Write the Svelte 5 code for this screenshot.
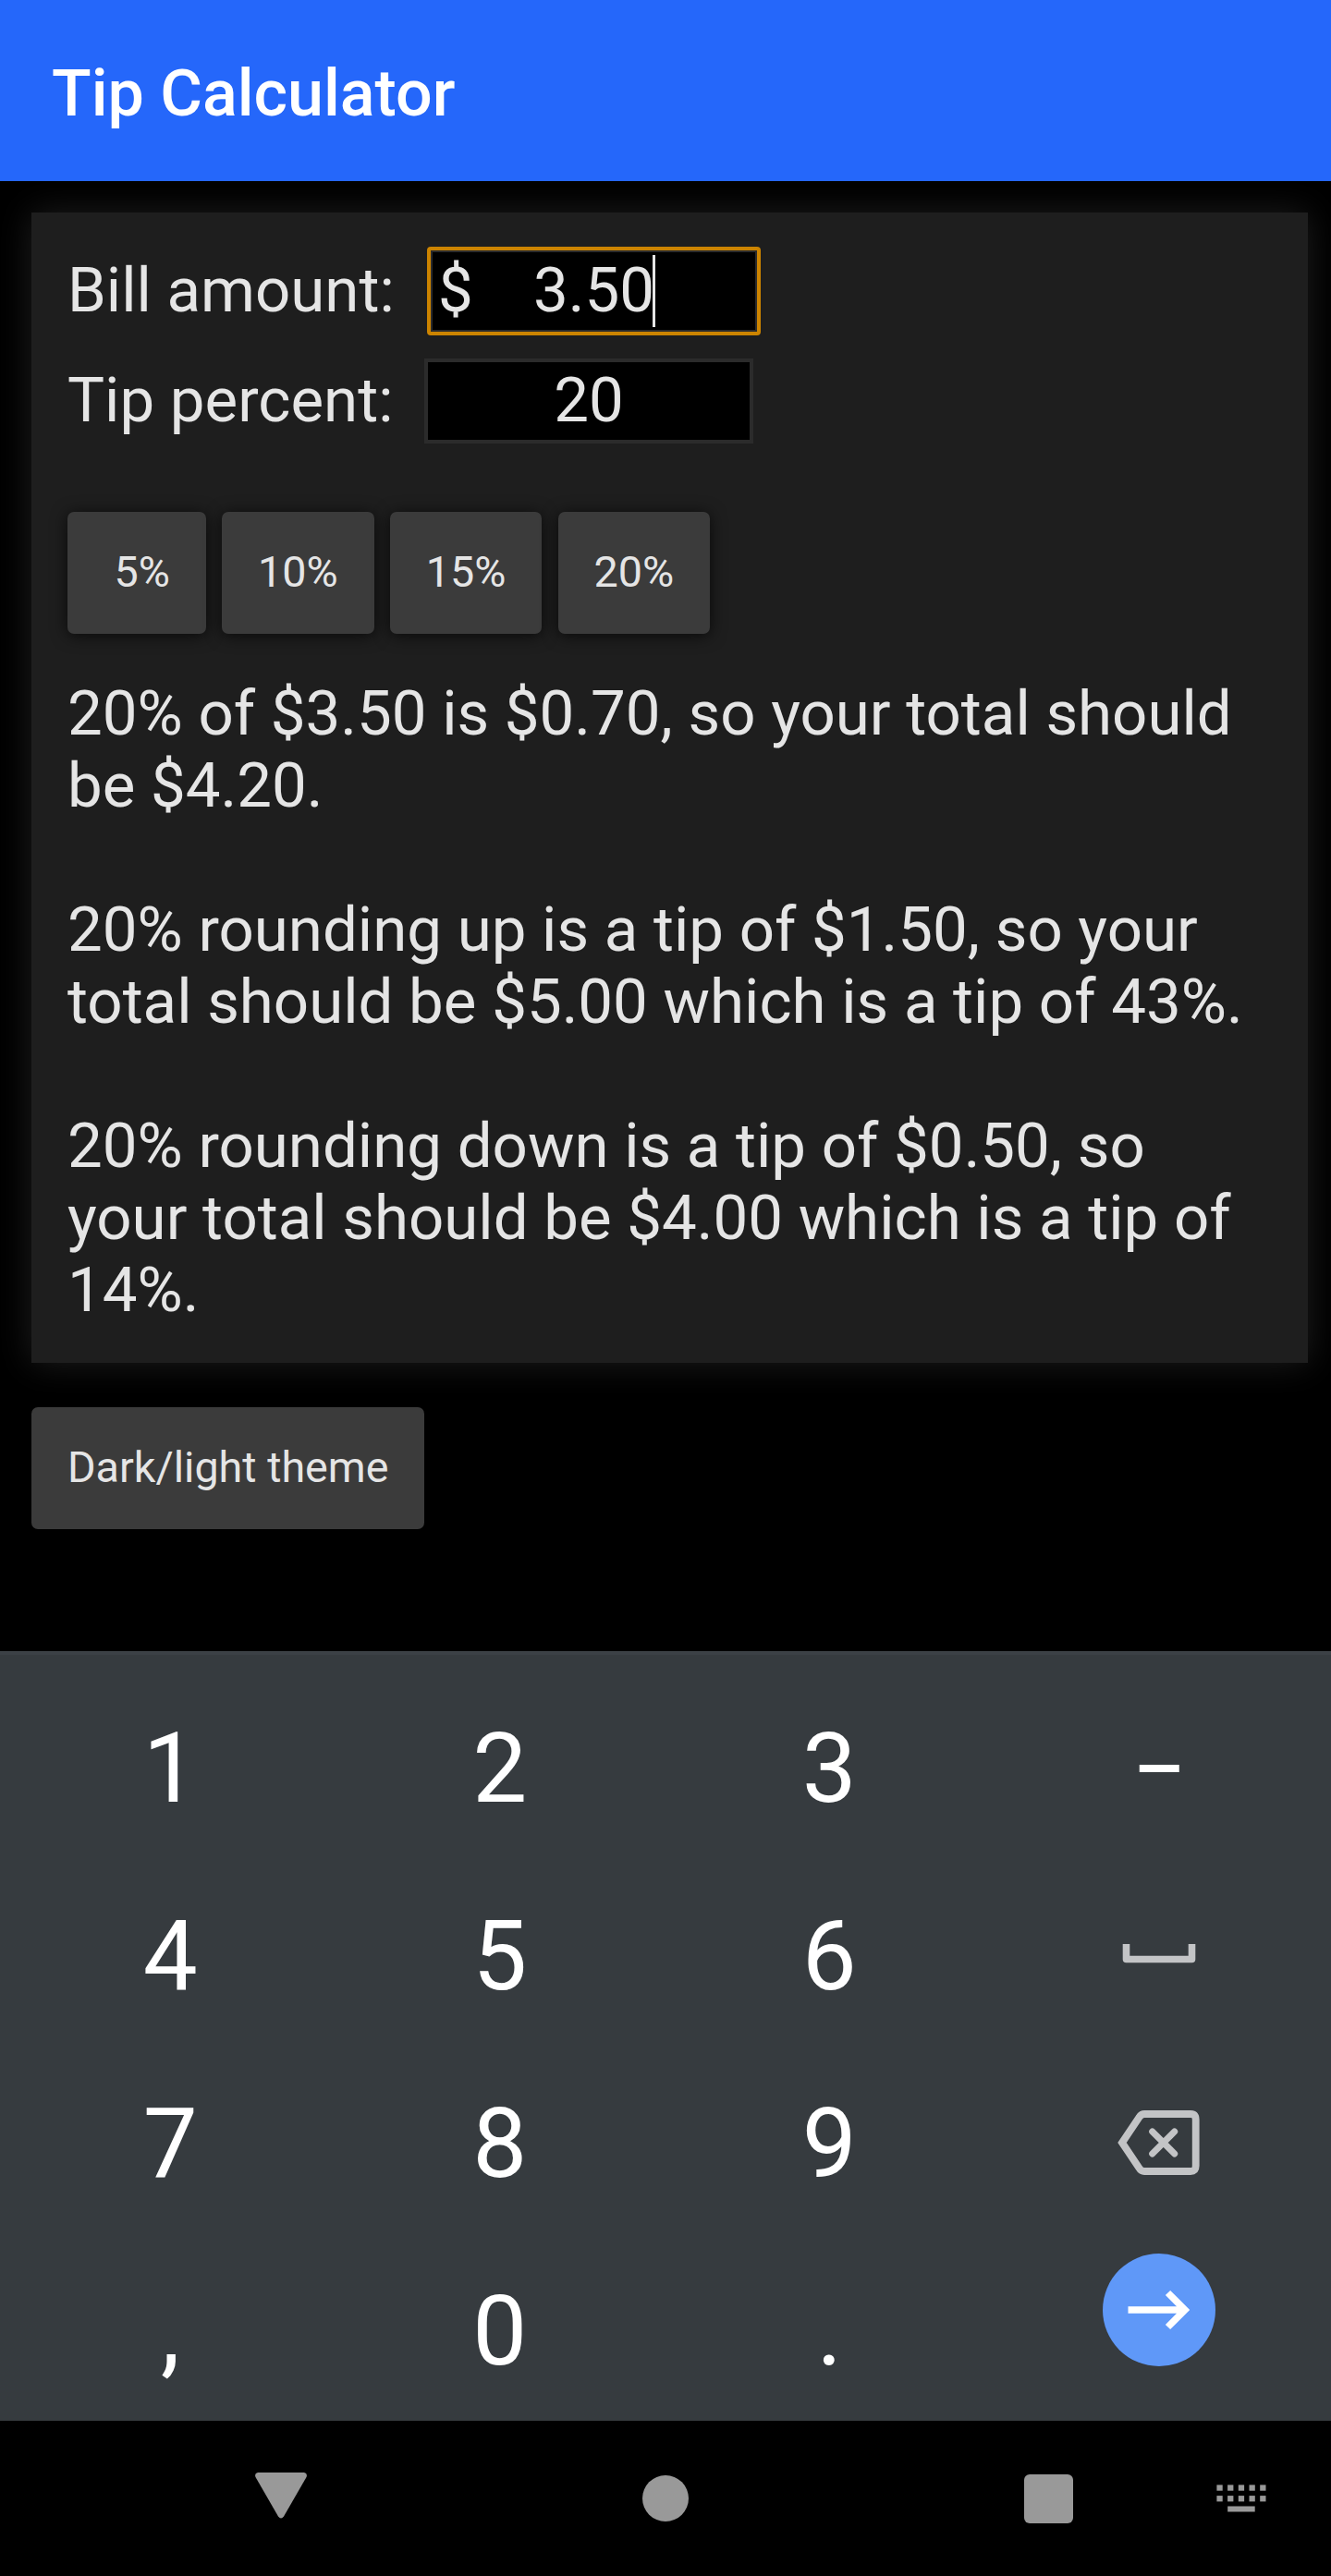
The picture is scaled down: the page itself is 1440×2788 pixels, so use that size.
<script>
  let bill = $state('3.50');
  let percent = $state('20');
  const presets = ['\u00a05%', '10%', '15%', '20%'];
  const money = (n) => '$' + n.toFixed(2);

  const amount = $derived(Number(bill));
  const tip = $derived((amount * Number(percent)) / 100);
  const total = $derived(amount + tip);
  const up = $derived(Math.ceil(total));
  const down = $derived(Math.floor(total));
  const rate = (t) => Math.round(((t - amount) / amount) * 100);

  const keys = ['1', '2', '3', '–', '4', '5', '6', 'space', '7', '8', '9', 'delete', ',', '0', '.', 'next'];
</script>

<div class="screen">
  <header><h1>Tip Calculator</h1></header>

  <main>
    <section class="card">
      <div class="row bill">
        <label for="bill">Bill amount:</label>
        <div class="field">
          <input id="bill" class="focused" bind:value={bill} />
          <span class="currency">$</span>
          <span class="caret"></span>
        </div>
      </div>
      <div class="row tip">
        <label for="tip">Tip percent:</label>
        <div class="field"><input id="tip" bind:value={percent} /></div>
      </div>

      <div class="presets">
        {#each presets as p}
          <button onclick={() => (percent = String(parseInt(p.trim())))}>{p}</button>
        {/each}
      </div>

      <p>{percent}% of {money(amount)} is {money(tip)}, so your total should be {money(total)}.</p>
      <p>{percent}% rounding up is a tip of {money(up - amount)}, so your total should be {money(up)} which is a tip of {rate(up)}%.</p>
      <p>{percent}% rounding down is a tip of {money(down - amount)}, so your total should be {money(down)} which is a tip of {rate(down)}%.</p>
    </section>

    <button class="theme">Dark/light theme</button>
  </main>

  <div class="keyboard">
    {#each keys as key}
      <div class="key" class:next={key === 'next'} class:dash={key === '–'} class:space={key === 'space'} class:delete={key === 'delete'}>
        {#if key === 'space'}
          <svg width="80" height="22" viewBox="0 0 80 22">
            <path d="M4.5 1V17.5H75.5V1" fill="none" stroke="#c3c4c6" stroke-width="7.6" stroke-linejoin="round" />
          </svg>
        {:else if key === 'delete'}
          <svg width="90" height="72" viewBox="0 0 90 72">
            <path d="M5 36L23.5 8.5Q25.5 5 29 5H79Q84.7 5 84.7 11V61Q84.7 67 79 67H29Q25.5 67 23.5 63.5Z" fill="none" stroke="#c3c4c6" stroke-width="7.8" />
            <path d="M37.7 24L61.7 48M61.7 24L37.7 48" fill="none" stroke="#c3c4c6" stroke-width="7" stroke-linecap="round" />
          </svg>
        {:else if key === 'next'}
          <span class="disc">
            <svg width="68" height="44" viewBox="0 0 68 44">
              <path d="M0.5 22H61M43.5 3.5L62 22L43.5 40.5" fill="none" stroke="#fff" stroke-width="7.4" />
            </svg>
          </span>
        {:else}
          {key}
        {/if}
      </div>
    {/each}
  </div>

  <nav>
    <svg class="back" width="56" height="50" viewBox="0 0 56 50">
      <path d="M3 0H53Q57 1 55.500 5L31 47.500Q28 51.500 25 47.500L0.500 5Q-1 1 3 0Z" fill="#999" />
    </svg>
    <span class="home"></span>
    <span class="recent"></span>
    <svg class="switcher" width="54" height="28" viewBox="0 0 54 28">
      {#each [0, 1, 2, 3, 4] as i}
        <rect x={0.4 + i * 11.7} y="0.4" width="6.300" height="6.300" fill="#999" />
        <rect x={0.4 + i * 11.7} y="12.100" width="6.300" height="6.300" fill="#999" />
      {/each}
      <rect x="12.200" y="23.500" width="29.500" height="6" fill="#999" />
    </svg>
  </nav>
</div>

<style>
  :global(body) {
    margin: 0;
    background: #000;
  }
  .screen {
    width: 1440px;
    height: 2788px;
    display: flex;
    flex-direction: column;
    overflow: hidden;
    background: #000;
    color: #e5e5e5;
    font-family: Roboto, sans-serif;
    font-size: 67.2px;
    line-height: 78px;
  }
  header {
    position: relative;
    z-index: 1;
    flex: none;
    height: 196px;
    padding-left: 56px;
    display: flex;
    align-items: center;
    box-sizing: border-box;
    background: #2567fa;
    color: #fff;
  }
  h1 {
    margin: 6px 0 0;
    font-size: 70px;
    font-weight: 500;
    line-height: 82px;
  }
  main {
    flex: none;
    height: 1591px;
    box-sizing: border-box;
    padding: 34px 25px 0 34px;
  }
  .card {
    height: 1245px;
    box-sizing: border-box;
    padding: 39px 39px 0;
    background: #1e1e1e;
    box-shadow: 0 0 35px #1e1e1e;
  }
  .row {
    display: flex;
    align-items: center;
    height: 92px;
  }
  .bill {
    margin-bottom: 27px;
  }
  label {
    padding-bottom: 2px;
  }
  .bill label {
    width: 391px;
  }
  .tip label {
    width: 386px;
  }
  .field {
    position: relative;
    display: flex;
  }
  input {
    box-sizing: border-box;
    width: 356px;
    height: 92px;
    margin: 0;
    padding: 2px 3px 4px;
    border: 4px solid #2b2b2b;
    border-radius: 0;
    background: #000;
    color: inherit;
    font: inherit;
    text-align: center;
    outline: none;
  }
  input.focused {
    width: 357px;
    outline: 4px solid #cc8400;
    outline-offset: -2px;
    border-radius: 2px;
  }
  .currency {
    position: absolute;
    left: 10px;
    top: 6px;
  }
  .caret {
    position: absolute;
    left: 242px;
    top: 7px;
    width: 3px;
    height: 78px;
    background: #e5e5e5;
  }
  button {
    height: 132px;
    padding: 0 39px 2px;
    border: 0;
    border-radius: 7px;
    background: #3b3b3b;
    color: #e5e5e5;
    font-family: inherit;
    font-size: 46.67px;
    white-space: pre;
  }
  .presets {
    display: flex;
    gap: 17.100px;
    margin: 74px 0 47px;
  }
  .presets button {
    box-shadow: 0 2px 17px rgba(0, 0, 0, 0.7);
  }
  p {
    margin: 0 0 78px;
  }
  .theme {
    display: block;
    margin-top: 48px;
  }
  .keyboard {
    flex: none;
    height: 833px;
    box-sizing: border-box;
    padding: 22px 8px 0 6px;
    border-top: 4px solid #3c4146;
    background: #363b3f;
    color: #fff;
    display: grid;
    grid-template-columns: repeat(4, 356.500px);
    grid-template-rows: repeat(4, 203px);
    font-size: 105px;
    line-height: 123px;
  }
  .key {
    display: flex;
    align-items: center;
    justify-content: center;
  }
  .dash {
    font-size: 86px;
    font-weight: 500;
  }
  .space {
    padding-bottom: 7px;
  }
  .delete {
    padding-bottom: 4px;
  }
  .next {
    align-items: flex-start;
    padding-top: 17px;
  }
  .disc {
    width: 122px;
    height: 122px;
    border-radius: 50%;
    background: #5f98f8;
    display: flex;
    align-items: center;
    justify-content: center;
  }
  nav {
    flex: none;
    height: 168px;
    display: flex;
    align-items: center;
    padding-left: 276px;
  }
  .back {
    margin-top: -6px;
  }
  .home {
    width: 50px;
    height: 50px;
    margin-left: 363px;
    border-radius: 50%;
    background: #999;
  }
  .recent {
    width: 53px;
    height: 53px;
    margin-left: 363px;
    border-radius: 6px;
    background: #999;
  }
  .switcher {
    overflow: visible;
    margin-left: 155px;
    margin-top: -2px;
  }
</style>
